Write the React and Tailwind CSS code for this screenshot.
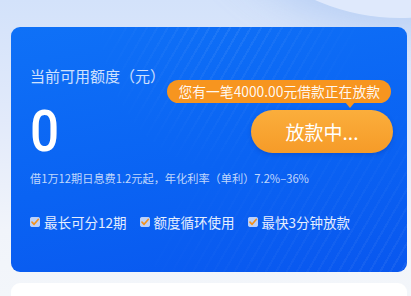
import { useState } from "react";

const features = ["最长可分12期", "额度循环使用", "最快3分钟放款"];

const CheckBox = () => (
  <svg width="10" height="10" viewBox="0 0 10 10" className="shrink-0">
    <rect x="0.5" y="0.5" width="9" height="9" rx="1" fill="#e6eeff" fillOpacity="0.8" stroke="#f3f6ff" strokeOpacity="0.6" />
    <path d="M2 5.2 L4.1 7.3 L8.4 2.3" fill="none" stroke="#f2921d" strokeWidth="1.7" strokeLinecap="round" strokeLinejoin="round" />
  </svg>
);

export default function App() {
  const [amount] = useState(0);

  return (
    <div
      className="relative w-[411px] h-[296px] overflow-hidden bg-[linear-gradient(180deg,#d3e2fa_0px,#e2eafa_120px,#f1f4fa_230px,#f3f6fa_296px)]"
      style={{ fontFamily: '"Noto Sans CJK SC", "Noto Sans", sans-serif' }}
    >
      {/* decorative circle behind the card */}
      <div className="absolute -top-[402px] left-[190px] w-[420px] h-[420px] rounded-full bg-[#dfe9fc] shadow-[0_0_40px_12px_rgba(150,185,240,0.45)]" />

      <div className="relative pt-[27px] pl-[11px]">
        <div className="relative w-[396px] h-[245px] rounded-[9px] overflow-hidden bg-[linear-gradient(170deg,#0f71f7_0%,#0a63f3_55%,#0957ef_100%)] pl-[19px] pr-[14px] pt-[38px]">
          <div className="absolute inset-0 bg-[repeating-linear-gradient(120deg,rgba(255,255,255,0.07)_0px,rgba(255,255,255,0.07)_2px,transparent_2px,transparent_9px)] [mask-image:radial-gradient(ellipse_at_55%_0%,black_0%,transparent_45%)]" />
          <div className="absolute inset-0 bg-[repeating-linear-gradient(120deg,rgba(255,255,255,0.06)_0px,rgba(255,255,255,0.06)_2px,transparent_2px,transparent_9px)] [mask-image:radial-gradient(ellipse_at_100%_100%,black_0%,transparent_50%)]" />

          <div className="relative text-[15px] leading-[21px] text-white/80">当前可用额度（元）</div>

          <div className="relative mt-[14px] h-[63px] flex items-center justify-between">
            <span
              className="text-[57px] leading-none font-medium text-white scale-x-90 origin-left"
              style={{ fontFamily: "Roboto, sans-serif" }}
            >
              {amount}
            </span>
            <button className="w-[142px] h-[43px] rounded-full bg-[linear-gradient(180deg,#fbae3c,#f69b28)] text-white text-[19px] leading-none shadow-[0_2px_4px_rgba(0,40,140,0.25)]">
              放款中...
            </button>
          </div>

          <div className="relative mt-[7px] text-[11.2px] leading-[16px] text-white/75">
            借1万12期日息费1.2元起，年化利率（单利）7.2%–36%
          </div>

          <div className="relative mt-[26px] flex items-center gap-[13px] text-[13.5px] leading-[20px] text-white/90">
            {features.map((f) => (
              <div key={f} className="flex items-center gap-[4px]">
                <CheckBox />
                <span>{f}</span>
              </div>
            ))}
          </div>

          {/* tooltip bubble above the button */}
          <div className="absolute top-[53px] right-[16px] h-[23px] px-[11px] flex items-center rounded-full bg-[#f7951f] text-white/95 text-[13.8px] leading-none">
            您有一笔4000.00元借款正在放款
            <span className="absolute -bottom-[5px] right-[36px] w-0 h-0 border-l-[5px] border-r-[5px] border-t-[6px] border-l-transparent border-r-transparent border-t-[#f7951f]" />
          </div>
        </div>

        <div className="mt-[11px] w-[396px] h-[60px] rounded-[9px] bg-white" />
      </div>
    </div>
  );
}
